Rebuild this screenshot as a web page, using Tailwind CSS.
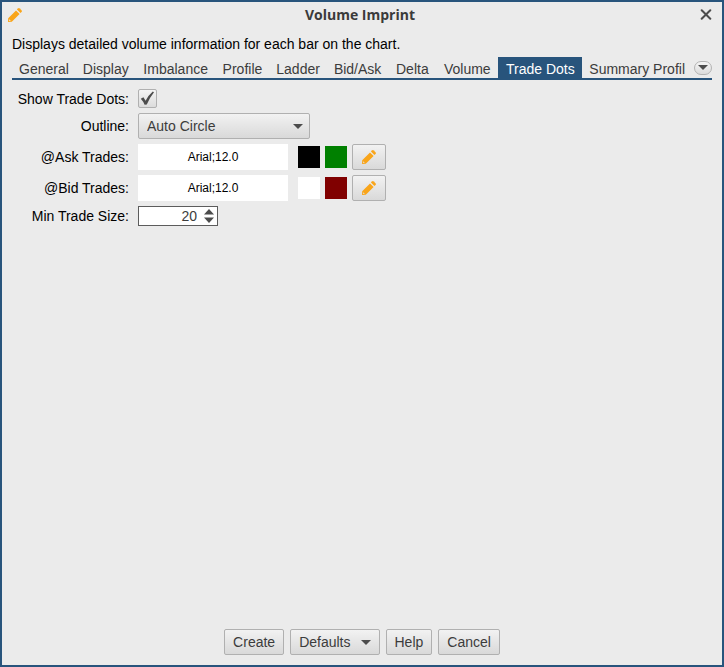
<!DOCTYPE html>
<html lang="en">
<head>
<meta charset="utf-8">
<meta name="viewport" content="width=device-width, initial-scale=1">
<title>Volume Imprint</title>
<script src="https://cdn.jsdelivr.net/npm/@tailwindcss/browser@4"></script>
</head>
<body class="font-['Liberation_Sans',Arial,sans-serif] text-[14px] leading-4 text-black">
<svg class="hidden" aria-hidden="true">
  <symbol id="pencil" viewBox="0 0 14 14">
    <path fill="#f9a51a" fill-rule="evenodd" d="M0 14 L.2 10.2 L8 2.4 L11.6 6 L3.8 13.8 Z M1.3 11.2 L1.1 12.9 L2.8 12.7 Z"/>
    <path fill="#f9a51a" d="M8.9 1.5 L9.9 .5 Q10.9 -.3 11.8 .5 L13.5 2.2 Q14.3 3.1 13.5 4.1 L12.5 5.1 Z"/>
  </symbol>
</svg>
<main class="flex min-h-screen flex-col border-2 border-[#28547c] bg-[#ebebeb] px-[10px] pb-[10px]">
  <header class="-ml-1 flex h-[26px] items-center justify-between">
    <svg class="size-[14px]" aria-hidden="true"><use href="#pencil"/></svg>
    <h1 class="font-['Open_Sans','Liberation_Sans',sans-serif] text-[14px] font-bold text-[#3a3a3a]">Volume Imprint</h1>
    <button type="button" aria-label="Close" class="flex h-5 w-[14px] items-center justify-end">
      <svg class="size-3" viewBox="0 0 12 12" fill="none" stroke="#4c4c4c" stroke-width="2" stroke-linecap="round" aria-hidden="true"><path d="M1.7 1.2 L10.3 9.8 M10.3 1.2 L1.7 9.8"/></svg>
    </button>
  </header>
  <p class="mt-2">Displays detailed volume information for each bar on the chart.</p>
  <div class="mt-[5px] flex items-center gap-[9px] border-b-2 border-[#28547c]">
    <div role="tablist" class="flex min-w-0 flex-1 overflow-hidden whitespace-nowrap text-[#3c3c3c]">
      <button type="button" role="tab" class="px-[7px] pt-1 pb-px">General</button>
      <button type="button" role="tab" class="px-[7px] pt-1 pb-px">Display</button>
      <button type="button" role="tab" class="grow px-[7px] pt-1 pb-px">Imbalance</button>
      <button type="button" role="tab" class="px-[7px] pt-1 pb-px">Profile</button>
      <button type="button" role="tab" class="px-[7px] pt-1 pb-px">Ladder</button>
      <button type="button" role="tab" class="px-[7px] pt-1 pb-px">Bid/Ask</button>
      <button type="button" role="tab" class="grow px-[7px] pt-1 pb-px">Delta</button>
      <button type="button" role="tab" class="grow px-[7px] pt-1 pb-px">Volume</button>
      <button type="button" role="tab" aria-selected="true" class="grow bg-[#28547c] px-[7px] pt-1 pb-px text-white">Trade Dots</button>
      <button type="button" role="tab" class="pt-1 pb-px pl-[7px]">Summary Profil</button>
    </div>
    <button type="button" aria-label="More tabs" class="flex h-[14px] w-[18px] shrink-0 items-center justify-center rounded-full border border-[#b4b4b4] bg-linear-to-b from-[#f4f4f4] to-[#dcdcdc]">
      <svg class="h-[5px] w-[10px]" viewBox="0 0 10 5" fill="#4c4c4c" aria-hidden="true"><path d="M0 0H10L5 5Z"/></svg>
    </button>
  </div>

  <form id="settings" class="mt-[9px] grid grid-cols-[117px_1fr] items-center gap-x-[9px] gap-y-[5px]">
    <label for="show" class="text-right">Show Trade Dots:</label>
    <div class="relative size-[19px]">
      <input id="show" type="checkbox" checked class="peer block size-[19px] appearance-none rounded-[2px] border border-[#b0b0b0] bg-linear-to-b from-[#f4f4f4] to-[#dcdcdc]">
      <svg class="pointer-events-none absolute inset-0 hidden size-[19px] peer-checked:block" viewBox="0 0 19 19" aria-hidden="true"><path fill="#4c4c4c" d="M2.8 9.8 L5.4 8.2 L7.6 11.8 Q10.4 6 14.8 2.4 L16 3.2 Q11.6 8.6 8.8 15.6 L6.6 15.8 Q5.2 12.3 2.8 9.8Z"/></svg>
    </div>

    <label for="outline" class="text-right">Outline:</label>
    <div class="relative w-[172px]">
      <select id="outline" class="block h-[26px] w-full appearance-none rounded-[2px] border border-[#b0b0b0] bg-linear-to-b from-[#f2f2f2] to-[#d9d9d9] pl-2 text-[#3c3c3c]">
        <option>Auto Circle</option>
      </select>
      <svg class="pointer-events-none absolute top-[11px] right-[7px] h-[5px] w-[10px]" viewBox="0 0 10 5" fill="#4c4c4c" aria-hidden="true"><path d="M0 0H10L5 5Z"/></svg>
    </div>

    <label for="ask" class="text-right">@Ask Trades:</label>
    <div class="flex items-center gap-[5px]">
      <input id="ask" type="text" readonly value="Arial;12.0" class="mr-[5px] h-[26px] w-[150px] bg-white text-center text-[12px]">
      <button type="button" aria-label="Ask text colour" class="size-[22px] bg-black"></button>
      <button type="button" aria-label="Ask fill colour" class="size-[22px] bg-[#008000]"></button>
      <button type="button" aria-label="Edit ask trades" class="flex h-[26px] w-[34px] items-center justify-center rounded-[2px] border border-[#b0b0b0] bg-linear-to-b from-[#f2f2f2] to-[#d9d9d9]"><svg class="size-[14px]" aria-hidden="true"><use href="#pencil"/></svg></button>
    </div>

    <label for="bid" class="text-right">@Bid Trades:</label>
    <div class="flex items-center gap-[5px]">
      <input id="bid" type="text" readonly value="Arial;12.0" class="mr-[5px] h-[26px] w-[150px] bg-white text-center text-[12px]">
      <button type="button" aria-label="Bid text colour" class="size-[22px] bg-white"></button>
      <button type="button" aria-label="Bid fill colour" class="size-[22px] bg-[#800000]"></button>
      <button type="button" aria-label="Edit bid trades" class="flex h-[26px] w-[34px] items-center justify-center rounded-[2px] border border-[#b0b0b0] bg-linear-to-b from-[#f2f2f2] to-[#d9d9d9]"><svg class="size-[14px]" aria-hidden="true"><use href="#pencil"/></svg></button>
    </div>

    <label for="size" class="text-right">Min Trade Size:</label>
    <div class="flex h-5 w-20 items-center gap-[7px] border border-[#5c5c5c] bg-white pr-[3px]">
      <input id="size" type="number" value="20" class="min-w-0 flex-1 appearance-none text-right text-[#3c3c3c] [-moz-appearance:textfield] [&::-webkit-inner-spin-button]:appearance-none">
      <div class="flex flex-col gap-[2px]">
        <button type="button" aria-label="Increase"><svg class="block h-[6px] w-[10px]" viewBox="0 0 10 6" fill="#4c4c4c" aria-hidden="true"><path d="M0 5.5H10L5 0Z"/></svg></button>
        <button type="button" aria-label="Decrease"><svg class="block h-[6px] w-[10px]" viewBox="0 0 10 6" fill="#4c4c4c" aria-hidden="true"><path d="M0 .5H10L5 6Z"/></svg></button>
      </div>
    </div>
  </form>

  <footer class="mt-auto flex justify-center gap-[6px] text-[#3c3c3c]">
    <button type="submit" form="settings" class="h-[26px] rounded-[2px] border border-[#b0b0b0] bg-linear-to-b from-[#f2f2f2] to-[#d9d9d9] px-2">Create</button>
    <button type="button" class="flex h-[26px] items-center gap-[10px] rounded-[2px] border border-[#b0b0b0] bg-linear-to-b from-[#f2f2f2] to-[#d9d9d9] px-2">Defaults<svg class="h-[5px] w-[10px]" viewBox="0 0 10 5" fill="#4c4c4c" aria-hidden="true"><path d="M0 0H10L5 5Z"/></svg></button>
    <button type="button" class="h-[26px] rounded-[2px] border border-[#b0b0b0] bg-linear-to-b from-[#f2f2f2] to-[#d9d9d9] px-2">Help</button>
    <button type="button" class="h-[26px] rounded-[2px] border border-[#b0b0b0] bg-linear-to-b from-[#f2f2f2] to-[#d9d9d9] px-2">Cancel</button>
  </footer>
</main>
</body>
</html>
